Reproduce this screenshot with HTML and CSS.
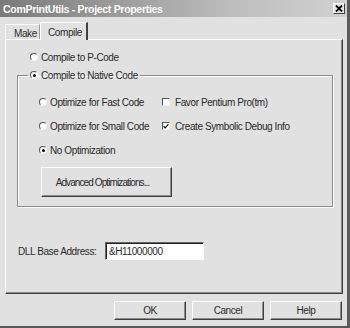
FILE: index.html
```html
<!DOCTYPE html>
<html lang="en">
<head>
    <meta charset="UTF-8">
    <title>ComPrintUtils - Project Properties</title>
    <link rel="stylesheet" href="styles.css">
</head>
<body>

    <div class="window">
        <div class="titlebar">
            <span class="title">ComPrintUtils - Project Properties</span>
            <span class="close">
                <svg width="8" height="7" viewBox="0 0 8 7"><path d="M1 0.5 L7 6.5 M7 0.5 L1 6.5" stroke="#000" stroke-width="1.8"/></svg>
            </span>
        </div>

        <div class="tabs">
            <div class="tab">Make</div>
            <div class="tab active">Compile</div>
        </div>

        <div class="panel">
            <div class="row pcode">
                <span class="radio"></span>Compile to P-Code
            </div>

            <fieldset class="group">
                <legend class="row"><span class="radio on"></span>Compile to Native Code</legend>
                <div class="options">
                    <div class="row"><span class="radio"></span>Optimize for Fast Code</div>
                    <div class="row"><span class="check"></span>Favor Pentium Pro(tm)</div>
                    <div class="row"><span class="radio"></span>Optimize for Small Code</div>
                    <div class="row"><span class="check on">
                        <svg width="7" height="7" viewBox="0 0 7 7"><path d="M0.8 3.2 L2.6 5.2 L6.2 1" fill="none" stroke="#000" stroke-width="1.4"/></svg>
                    </span>Create Symbolic Debug Info</div>
                    <div class="row"><span class="radio on"></span>No Optimization</div>
                </div>
                <button class="btn advanced">Advanced Optimizations...</button>
            </fieldset>

            <div class="dll">
                <span class="dll-label">DLL Base Address:</span>
                <span class="field">&amp;H11000000</span>
            </div>
        </div>

        <div class="footer">
            <button class="btn">OK</button>
            <button class="btn">Cancel</button>
            <button class="btn">Help</button>
        </div>
    </div>

</body>
</html>
```

FILE: styles.css
```css
body {
    margin: 0;
    background-color: #e1e1e1;
    font-family: "Liberation Sans", Arial, sans-serif;
    font-size: 10px;
    letter-spacing: -0.4px;
    color: #2a2a2a;
}

.window {
    width: 350px;
    height: 328px;
    box-sizing: border-box;
    border-right: 3px solid #5a5a5a;
    border-bottom: 2px solid #5a5a5a;
    background-color: #e1e1e1;
    display: flex;
    flex-direction: column;
}

.titlebar {
    height: 17px;
    display: flex;
    align-items: center;
    justify-content: space-between;
    padding: 0 2px 0 3px;
    background: linear-gradient(to right, #7a7a7a, #c0c0c0 70%, #d0d0d0);
}

.title {
    color: #fff;
    font-weight: bold;
    font-size: 10.5px;
    letter-spacing: -0.3px;
}

.close {
    width: 12px;
    height: 11px;
    box-sizing: border-box;
    background-color: #e4e4e4;
    border: 1px solid;
    border-color: #fff #404040 #404040 #fff;
    display: flex;
    align-items: center;
    justify-content: center;
}

.tabs {
    display: flex;
    align-items: flex-end;
    margin: 5px 0 0 5px;
    height: 17px;
}

.tab {
    height: 15px;
    box-sizing: border-box;
    padding: 3px 0 0 8px;
    width: 35px;
    border-top: 1px solid #fff;
    border-left: 1px solid #fff;
    border-right: 1px solid #9a9a9a;
}

.tab.active {
    height: 18px;
    width: 48px;
    padding: 4px 0 0 7px;
    border-right: 2px solid #404040;
    margin-bottom: -1px;
    background-color: #e1e1e1;
    position: relative;
}

.panel {
    margin-left: 5px;
    width: 338px;
    height: 255px;
    box-sizing: border-box;
    border: 1px solid;
    border-color: #fff #404040 #404040 #fff;
    box-shadow: inset -1px -1px 0 #8c8c8c;
}

.row {
    display: flex;
    align-items: center;
    height: 12px;
    white-space: nowrap;
}

.pcode {
    margin: 11px 0 0 24px;
}

.radio {
    width: 8px;
    height: 8px;
    box-sizing: border-box;
    border-radius: 50%;
    border: 1px solid;
    border-color: #555 #f4f4f4 #f4f4f4 #555;
    background-color: #fff;
    margin-right: 3px;
    display: flex;
    align-items: center;
    justify-content: center;
}

.radio.on::after {
    content: "";
    width: 3px;
    height: 3px;
    border-radius: 50%;
    background-color: #000;
}

.check {
    width: 8px;
    height: 8px;
    box-sizing: border-box;
    border: 1px solid;
    border-color: #555 #f4f4f4 #f4f4f4 #555;
    background-color: #fff;
    margin-right: 5px;
    display: flex;
    align-items: center;
    justify-content: center;
}

.group {
    margin: 6px 0 0 11px;
    width: 316px;
    box-sizing: border-box;
    padding: 0 0 9px 0;
    border: 1px solid #8c8c8c;
    box-shadow: 1px 1px 0 #fff, inset 1px 1px 0 #fff;
    min-width: 0;
}

.group legend {
    margin-left: 10px;
    padding: 0 2px;
}

.options {
    display: grid;
    grid-template-columns: 123px auto;
    row-gap: 12px;
    margin: 15px 0 0 21px;
}

.options .row:last-child {
    grid-column: 1;
}

.btn {
    font-family: "Liberation Sans", Arial, sans-serif;
    font-size: 10px;
    letter-spacing: -0.4px;
    color: #2a2a2a;
    background-color: #e1e1e1;
    border: 1px solid;
    border-color: #fff #404040 #404040 #fff;
    box-shadow: inset -1px -1px 0 #8c8c8c;
    padding: 0;
}

.advanced {
    display: block;
    margin: 11px 0 0 23px;
    width: 131px;
    height: 30px;
    padding-right: 8px;
    letter-spacing: -0.9px;
}

.dll {
    display: flex;
    align-items: center;
    margin: 35px 0 0 12px;
}

.dll-label {
    width: 87px;
}

.field {
    width: 99px;
    height: 18px;
    box-sizing: border-box;
    background-color: #fff;
    border: 1px solid;
    border-color: #666 #fff #fff #666;
    box-shadow: inset 1px 1px 0 #222;
    padding: 3px 0 0 3px;
}

.footer {
    display: flex;
    justify-content: flex-end;
    gap: 6px;
    margin-top: 7px;
    padding-right: 5px;
}

.footer .btn {
    width: 72px;
    height: 19px;
}
```
